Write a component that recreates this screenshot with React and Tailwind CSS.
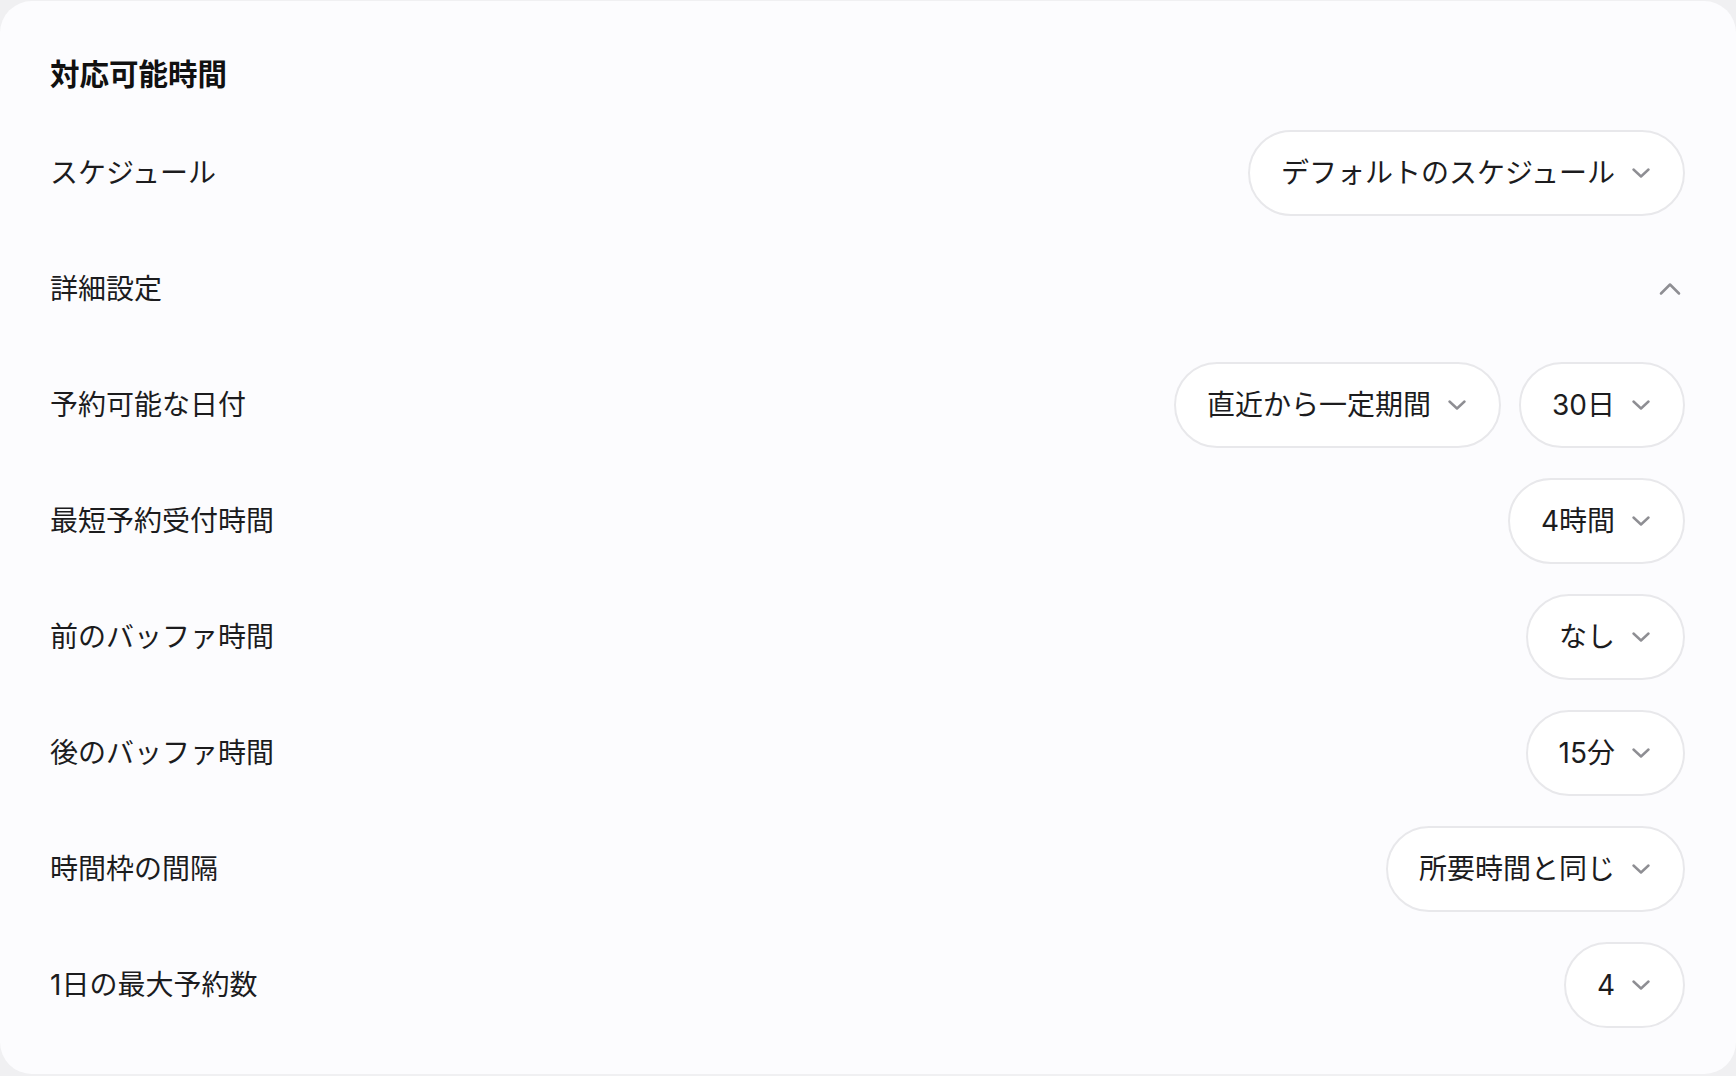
import { ChevronUp } from 'lucide-react'

const FONT = { fontFamily: '"Inter", "Noto Sans CJK JP", sans-serif' }

const ROWS = [
  { label: '予約可能な日付', selects: ['直近から一定期間', '30日'] },
  { label: '最短予約受付時間', selects: ['4時間'] },
  { label: '前のバッファ時間', selects: ['なし'] },
  { label: '後のバッファ時間', selects: ['15分'] },
  { label: '時間枠の間隔', selects: ['所要時間と同じ'] },
  { label: '1日の最大予約数', selects: ['4'] },
]

export default function App() {
  return (
    <div className="min-h-screen bg-[#f0f0f2] pt-px" style={FONT}>
      <div className="rounded-[32px] bg-[#fcfcfe] pl-[50px] pr-[51px] pt-[53px] pb-[46px]">

        {/* Header */}
        <h2 className="text-[29.5px] leading-[40px] font-bold text-[#111111]">
          対応可能時間
        </h2>

        <div className="mt-[36px] flex flex-col gap-[30px]">
          <Row label="スケジュール">
            <Select value="デフォルトのスケジュール" />
          </Row>

          <Row label="詳細設定">
            <ChevronUp size={36} strokeWidth={1.7} className="-mr-[3px] text-[#8e8e93]" />
          </Row>

          {ROWS.map(row => (
            <Row key={row.label} label={row.label}>
              <div className="flex items-center gap-[18px]">
                {row.selects.map(s => <Select key={s} value={s} />)}
              </div>
            </Row>
          ))}
        </div>
      </div>
    </div>
  )
}

function Row({ label, children }) {
  return (
    <div className="h-[86px] flex items-center justify-between">
      <span className="text-[28px] text-[#1c1c1e]">{label}</span>
      {children}
    </div>
  )
}

function Select({ value }) {
  return (
    <button className="h-[86px] flex items-center gap-[17px] rounded-full border-2 border-[#e8e8eb] bg-white pl-[31px] pr-[33px] text-[28px] text-[#1c1c1e]">
      <span>{value}</span>
      <ChevronIcon />
    </button>
  )
}

function ChevronIcon() {
  return (
    <svg width="18" height="10" viewBox="0 0 18 10" fill="none">
      <path d="M1.5 1.5L9 8.5L16.5 1.5" stroke="#8e8e93" strokeWidth="2.4"
        strokeLinecap="round" strokeLinejoin="round" />
    </svg>
  )
}
